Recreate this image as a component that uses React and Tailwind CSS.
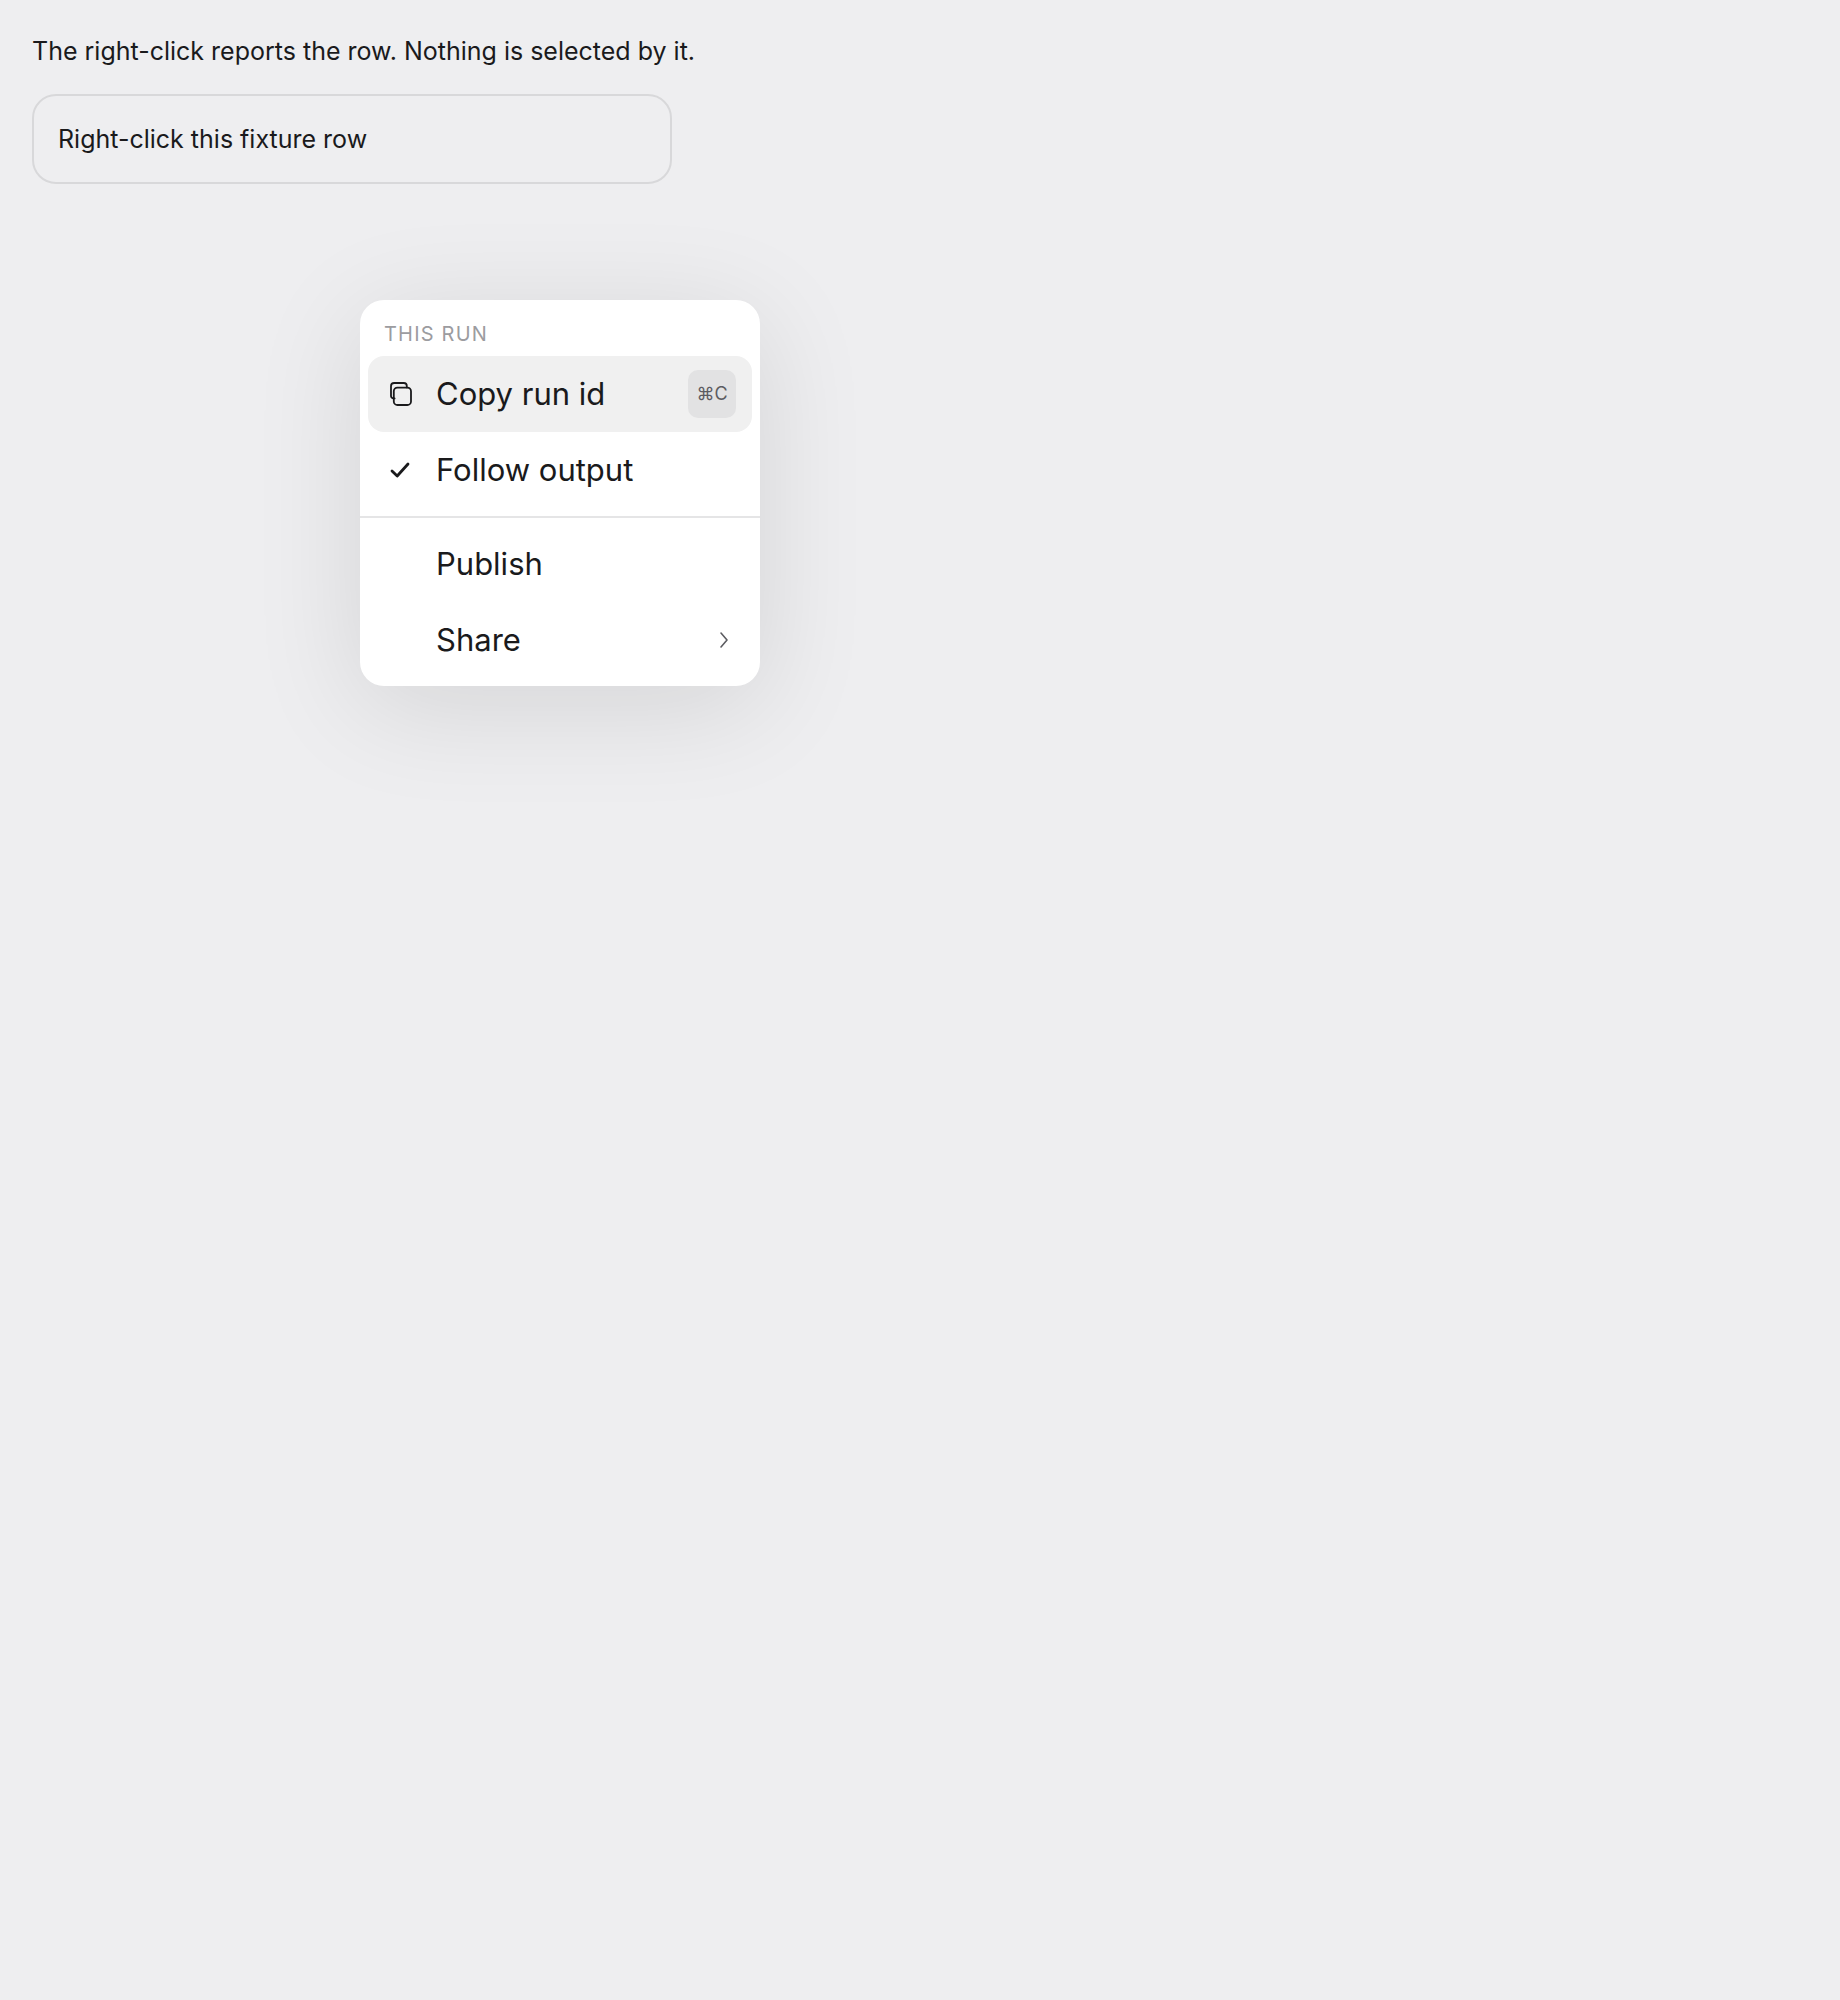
function CopyIcon() {
    return (
        <svg width="32" height="32" viewBox="0 0 32 32" fill="none" stroke="currentColor" strokeWidth="1.8" strokeLinecap="round" strokeLinejoin="round" aria-hidden="true">
            <rect x="9.8" y="9.6" width="17.2" height="17.4" rx="3.6" />
            <path d="M10.6 20.4H9.4A2.4 2.4 0 0 1 7 18V8.2A3.2 3.2 0 0 1 10.2 5h9.6a3 3 0 0 1 3 3v1.4" />
        </svg>
    );
}

function CheckIcon() {
    return (
        <svg width="32" height="32" viewBox="0 0 32 32" fill="none" stroke="currentColor" strokeWidth="2.8" strokeLinecap="round" strokeLinejoin="round" aria-hidden="true">
            <path d="M8 17 13.2 22 24 10" />
        </svg>
    );
}

function ChevronIcon() {
    return (
        <svg width="24" height="24" viewBox="0 0 24 24" fill="none" stroke="currentColor" strokeWidth="1.6" strokeLinecap="round" strokeLinejoin="round" className="text-[#5c5c61]" aria-hidden="true">
            <path d="M9 5 15 12 9 19" />
        </svg>
    );
}

function MenuItem({ icon, label, active, trailing, ...props }) {
    return (
        <button type="button" {...props}
                className={`flex h-[76px] w-full items-center gap-5 rounded-2xl px-4 text-left ${active ? 'bg-[#f0f0f0]' : ''}`}>
            <span className="flex size-8 shrink-0 items-center justify-center">{icon}</span>
            <span className="flex-1 text-[31px] leading-10">{label}</span>
            {trailing}
        </button>
    );
}

export default function App() {
    return (
        <main className="min-h-screen bg-[#eeeef0] p-8 font-['Inter',sans-serif] text-[#1a1a1c]">
            <p className="mb-6 text-[25px] leading-[38px]">The right-click reports the row. Nothing is selected by it.</p>
            <div className="max-w-[640px] rounded-3xl border-2 border-[#d8d8da] p-6 text-[25px] leading-[38px]">
                Right-click this fixture row
            </div>

            <div role="menu" aria-label="This run"
                 className="absolute left-[360px] top-[300px] w-[400px] rounded-3xl bg-white shadow-[0_20px_112px_rgba(0,0,0,0.11)]">
                <div className="p-2">
                    <div className="flex h-12 items-center px-4 pt-1 text-xl tracking-[0.06em] text-[#9c9ca0]">THIS RUN</div>
                    <MenuItem role="menuitem" icon={<CopyIcon />} label="Copy run id" active
                              trailing={<kbd className="flex size-12 items-center justify-center rounded-[10px] bg-[#e2e2e3] font-['Inter',sans-serif] text-lg text-[#5c5c61]">⌘C</kbd>} />
                    <MenuItem role="menuitemcheckbox" aria-checked="true" icon={<CheckIcon />} label="Follow output" />
                </div>
                <div className="border-t-2 border-[#e5e5e6] p-2">
                    <MenuItem role="menuitem" label="Publish" />
                    <MenuItem role="menuitem" aria-haspopup="menu" label="Share" trailing={<ChevronIcon />} />
                </div>
            </div>
        </main>
    );
}
